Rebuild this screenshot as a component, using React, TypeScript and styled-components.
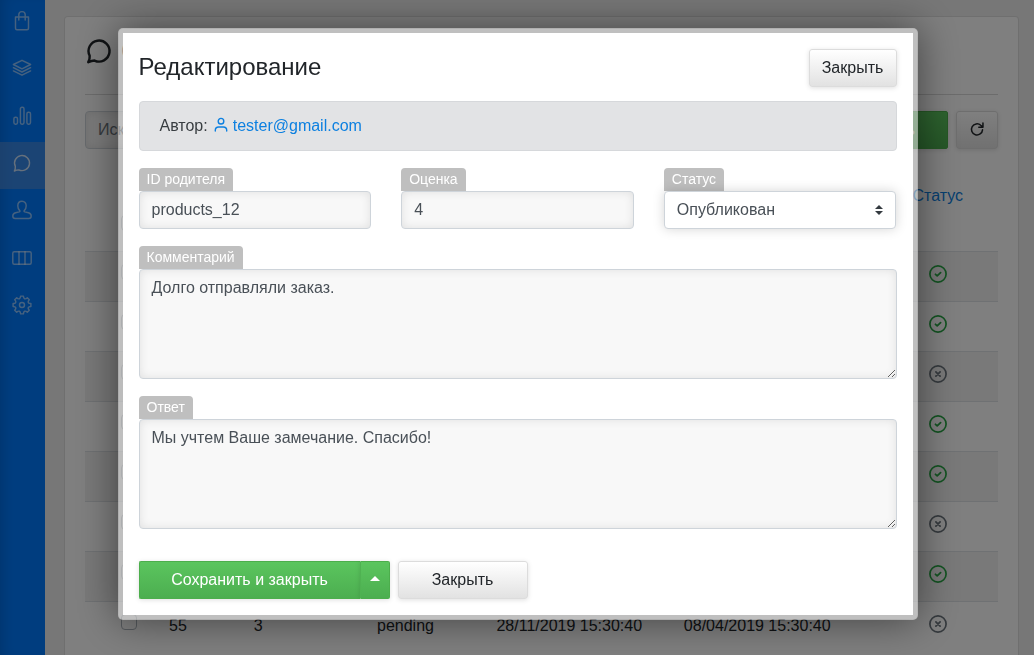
import React from "react";
import styled, { createGlobalStyle, css } from "styled-components";

const GlobalStyle = createGlobalStyle`
  *, *::before, *::after { box-sizing: border-box; }
  html, body { height: 100%; }
  body {
    margin: 0;
    overflow: hidden;
    background: #efefef;
    color: #212529;
    font: 400 16px/24px "Liberation Sans", Arial, sans-serif;
  }
  button, input, select, textarea { font: inherit; margin: 0; }
`;

const Shell = styled.div`
  display: flex;
  height: 100vh;
  overflow: hidden;
`;

const Sidebar = styled.nav`
  flex: none;
  width: 45px;
  background: #007bff;
  box-shadow: inset 10px 0 16px -10px rgba(0, 0, 0, 0.2);
  display: flex;
  flex-direction: column;
`;

const NavItem = styled.a<{ $active?: boolean }>`
  display: flex;
  align-items: center;
  justify-content: center;
  flex: none;
  height: 47.33px;
  padding: 0 1px 5px 0;
  color: ${(p) => (p.$active ? "rgba(255,255,255,.75)" : "rgba(255,255,255,.55)")};
  background: ${(p) => (p.$active ? "rgba(108,150,210,.5)" : "transparent")};
  svg { display: block; }
`;

const Main = styled.main`
  flex: 1;
  padding: 16px 15px 0 19px;
`;

const Card = styled.section`
  height: 800px;
  padding: 16px 20px;
  background: #fff;
  border: 1px solid rgba(0, 0, 0, 0.125);
  border-radius: 4px;
`;

const PageTitle = styled.h1`
  display: flex;
  align-items: center;
  gap: 8px;
  height: 38px;
  margin: 0;
  padding-bottom: 3px;
  font-size: 28px;
  font-weight: 400;
  svg { display: block; }
`;

const Divider = styled.hr`
  margin: 23px 0 16px;
  border: 0;
  border-top: 1px solid rgba(0, 0, 0, 0.15);
`;

const Toolbar = styled.div`
  display: flex;
  gap: 8px;
`;

const fieldBox = css`
  display: block;
  width: 100%;
  height: 38px;
  padding: 6px 12px;
  color: #495057;
  background: #f8f8f8;
  border: 1px solid #ced4da;
  border-radius: 4px;
  box-shadow: inset 0 0 10px rgba(0, 0, 0, 0.1);
  outline: none;
`;

const SearchInput = styled.input`
  ${fieldBox}
  flex: 1;
  width: auto;
  &::placeholder { color: #6c757d; opacity: 1; }
`;

const Button = styled.button<{ $width?: number; $green?: boolean }>`
  display: flex;
  align-items: center;
  justify-content: center;
  flex: none;
  height: 38px;
  width: ${(p) => (p.$width ? `${p.$width}px` : "auto")};
  padding: 0;
  white-space: nowrap;
  border-radius: ${(p) => (p.$green ? "2px" : "3px")};
  box-shadow: 0 1px 5px rgba(0, 0, 0, 0.13);
  ${(p) =>
    p.$green
      ? css`
          color: #fff;
          border: 1px solid #4cae4c;
          background: linear-gradient(#5bc55e, #4cae50);
        `
      : css`
          color: #212529;
          border: 1px solid #dcdcdc;
          background: linear-gradient(#fff, #e2e2e2);
        `}
`;

const Table = styled.div`
  margin-top: 10px;
`;

const columns = css`
  display: grid;
  grid-template-columns: 78px 30px 130.5px 164px 163.5px 212.5px 134.5px;
`;

const HeadRow = styled.div`
  ${columns}
  height: 92px;
`;

const Row = styled.div<{ $striped: boolean }>`
  ${columns}
  height: 50px;
  border-top: 1px solid #dee2e6;
  background: ${(p) => (p.$striped ? "rgba(0,0,0,.05)" : "transparent")};
`;

const Cell = styled.div`
  padding-top: 12px;
  text-align: center;
  white-space: nowrap;
`;

const CheckCell = styled.div<{ $head?: boolean }>`
  padding: ${(p) => (p.$head ? "56px" : "12px")} 0 0 36px;
`;

const Check = styled.span`
  display: block;
  width: 16px;
  height: 16px;
  border: 1px solid #adb5bd;
  border-radius: 4px;
  background: #fff;
`;

const StatusCell = styled.div<{ $ok?: boolean }>`
  display: flex;
  justify-content: center;
  padding: 12px 0 0 14px;
  color: ${(p) => (p.$ok ? "#28a745" : "#6c757d")};
`;

const StatusHead = styled.div`
  padding: 25px 0 0 14px;
  text-align: center;
  color: #0d80e0;
`;

const Backdrop = styled.div`
  position: fixed;
  inset: 0;
  padding: 28px 0 0 117.5px;
  background: rgba(0, 0, 0, 0.5);
`;

const Modal = styled.div`
  width: 800px;
  height: 592px;
  padding: 16px;
  background: #fff;
  background-clip: padding-box;
  border: 5px solid rgba(255, 255, 255, 0.5);
  border-radius: 5px;
  box-shadow: 0 0 40px rgba(0, 0, 0, 0.5);
`;

const ModalHeader = styled.header`
  display: flex;
  justify-content: space-between;
  height: 38px;
  margin-bottom: 14px;
`;

const ModalTitle = styled.h2`
  margin: 0;
  font-size: 24px;
  font-weight: 400;
  line-height: 36px;
`;

const AuthorBar = styled.div`
  display: flex;
  align-items: center;
  height: 50px;
  padding: 0 20px;
  color: #383d41;
  background: #e2e3e5;
  border: 1px solid #d6d8db;
  border-radius: 4px;
`;

const AuthorLink = styled.a`
  display: flex;
  align-items: center;
  gap: 5px;
  margin-left: 6px;
  color: #0d80e0;
  svg { margin-bottom: 3px; }
`;

const FieldRow = styled.div`
  display: grid;
  grid-template-columns: repeat(3, 1fr);
  gap: 30px;
`;

const Field = styled.div`
  margin-top: 17px;
`;

const Label = styled.label`
  display: block;
  width: fit-content;
  height: 23px;
  padding: 0 8px;
  font-size: 14px;
  line-height: 23px;
  color: #fff;
  background: #bfbfbf;
  border-radius: 4px 4px 0 0;
`;

const TextInput = styled.input`
  ${fieldBox}
`;

const TextArea = styled.textarea`
  ${fieldBox}
  height: 110px;
  resize: vertical;
`;

const SelectBox = styled.div`
  ${fieldBox}
  display: flex;
  align-items: center;
  justify-content: space-between;
  width: calc(100% - 0.5px);
  background: #fff;
  box-shadow: 0 0 12px rgba(0, 0, 0, 0.17);
`;

const Footer = styled.footer`
  display: flex;
  gap: 7.5px;
  margin-top: 32px;
`;

const Split = styled.div`
  display: flex;
  border-radius: 2px;
  box-shadow: 0 1px 5px rgba(0, 0, 0, 0.13);
`;

const SplitMain = styled(Button)`
  border-radius: 2px 0 0 2px;
  border-right: 0;
  box-shadow: none;
`;

const SplitCaret = styled(Button)`
  border-radius: 0 2px 2px 0;
  border-left-color: #4fb252;
  box-shadow: 0 0 5px rgba(0, 0, 0, 0.13);
  clip-path: inset(0 0 0 -6px);
  svg { margin-bottom: 3px; }
`;

type IconProps = { children: React.ReactNode; w?: number; h?: number; box?: string; sw?: number };
const Icon = ({ children, w = 22, h = 22, box = "0 0 22 22", sw = 1.45 }: IconProps) => (
  <svg width={w} height={h} viewBox={box} fill="none" stroke="currentColor" strokeWidth={sw} strokeLinecap="round" strokeLinejoin="round">
    {children}
  </svg>
);

/* Eight flat-topped teeth joined by rounded valleys. */
const gearPath = (() => {
  const at = (deg: number, r: number) => {
    const a = (deg * Math.PI) / 180;
    return `${(11 + r * Math.sin(a)).toFixed(2)} ${(11 - r * Math.cos(a)).toFixed(2)}`;
  };
  let d = `M${at(-9, 9)}`;
  for (let i = 0; i < 8; i++) {
    const c = i * 45;
    d += `L${at(c + 9, 9)}C${at(c + 13, 6.2)} ${at(c + 32, 6.2)} ${at(c + 36, 9)}`;
  }
  return `${d}Z`;
})();

const Bubble = ({ size, sw }: { size: number; sw: number }) => (
  <Icon w={size} h={size} box="0 0 24 24" sw={sw}>
    <path d="M2.8 21.6c.8-1.5 1.4-3.4 1.2-5.5A9 9 0 1 1 8.2 20.2c-1.8 0-3.5.5-5.4 1.4Z" />
  </Icon>
);

const navIcons = [
  <Icon><path d="M4.5 7h13v11.2a1.5 1.5 0 0 1-1.5 1.5H6a1.5 1.5 0 0 1-1.5-1.5ZM7.8 10V4.8a3.2 3.2 0 0 1 6.4 0V10" /></Icon>,
  <Icon><path d="M11 3.3 19.6 7.5 11 11.8 2.4 7.5ZM2.4 10.7 11 15l8.6-4.3M2.4 13.9 11 18.2l8.6-4.3" /></Icon>,
  <Icon><rect x="2.9" y="12.2" width="3.6" height="7" rx="1.6" /><rect x="9.4" y="2.2" width="3.6" height="17" rx="1.6" /><rect x="15.9" y="7.2" width="3.6" height="12" rx="1.6" /></Icon>,
  <Bubble size={20} sw={1.7} />,
  <Icon><path d="M11 2.2c-2.6 0-4.2 2-4.2 4.6 0 2 .7 3.8 1.9 4.8.5.5.2 1.1-.5 1.3l-3.6.9c-1.4.4-2.8 1.5-2.8 3.2 0 1.6.8 2.5 2.4 2.5h13.6c1.6 0 2.4-.9 2.4-2.5 0-1.7-1.4-2.8-2.8-3.2l-3.6-.9c-.7-.2-1-.8-.5-1.3 1.2-1 1.9-2.8 1.9-4.8 0-2.6-1.6-4.6-4.2-4.6Z" /></Icon>,
  <Icon><rect x="1.8" y="4.7" width="18.4" height="12.6" rx="1.5" /><path d="M8 4.7v12.6M14 4.7v12.6" /></Icon>,
  <Icon><path d={gearPath} /><circle cx="11" cy="11" r="2.5" /></Icon>,
];

const Status = ({ ok }: { ok: boolean }) => (
  <StatusCell $ok={ok}>
    <Icon w={20} h={20} box="0 0 20 20" sw={1.7}>
      <circle cx="10" cy="10" r="8.1" />
      <path strokeWidth="1.8" d={ok ? "m7.5 10.3 1.7 1.6 3.4-3.2" : "m7.9 7.9 4.2 4.2m0-4.2-4.2 4.2"} />
    </Icon>
  </StatusCell>
);

type Comment = { ok: boolean; id?: string; rating?: string; state?: string; created?: string; updated?: string };
const comments: Comment[] = [
  { ok: true },
  { ok: true },
  { ok: false },
  { ok: true },
  { ok: true },
  { ok: false },
  { ok: true },
  { ok: false, id: "55", rating: "3", state: "pending", created: "28/11/2019 15:30:40", updated: "08/04/2019 15:30:40" },
];

export default function App() {
  return (
    <>
      <GlobalStyle />
      <Shell>
        <Sidebar>
          {navIcons.map((icon, i) => (
            <NavItem key={i} $active={i === 3}>{icon}</NavItem>
          ))}
        </Sidebar>
        <Main>
          <Card>
            <PageTitle>
              <Bubble size={28} sw={2.1} />
              Отзывы
            </PageTitle>
            <Divider />
            <Toolbar>
              <SearchInput placeholder="Искать" />
              <Button $green $width={137}>Добавить</Button>
              <Button $width={42}>
                <Icon w={18} h={18} box="0 0 24 26" sw={2.2}>
                  <path d="M20 12.8a8 8 0 1 1-2.6-6.6L20 8.4M20.6 3v6h-6" />
                </Icon>
              </Button>
            </Toolbar>
            <Table>
              <HeadRow>
                <CheckCell $head><Check /></CheckCell>
                <Cell /><Cell /><Cell /><Cell /><Cell />
                <StatusHead>Статус</StatusHead>
              </HeadRow>
              {comments.map((c, i) => (
                <Row key={i} $striped={i % 2 === 0}>
                  <CheckCell><Check /></CheckCell>
                  <Cell>{c.id}</Cell>
                  <Cell>{c.rating}</Cell>
                  <Cell>{c.state}</Cell>
                  <Cell>{c.created}</Cell>
                  <Cell>{c.updated}</Cell>
                  <Status ok={c.ok} />
                </Row>
              ))}
            </Table>
          </Card>
        </Main>
      </Shell>
      <Backdrop>
        <Modal role="dialog">
          <ModalHeader>
            <ModalTitle>Редактирование</ModalTitle>
            <Button $width={88}>Закрыть</Button>
          </ModalHeader>
          <AuthorBar>
            Автор:
            <AuthorLink>
              <Icon w={14} h={16} box="0 0 14 16" sw={1.4}>
                <circle cx="7" cy="4.2" r="2.8" />
                <path d="M1.3 14v-.8c0-2 1.6-3.2 3.4-3.2h4.6c1.8 0 3.4 1.2 3.4 3.2v.8" />
              </Icon>
              tester@gmail.com
            </AuthorLink>
          </AuthorBar>
          <FieldRow>
            <Field>
              <Label>ID родителя</Label>
              <TextInput defaultValue="products_12" />
            </Field>
            <Field>
              <Label>Оценка</Label>
              <TextInput defaultValue="4" />
            </Field>
            <Field>
              <Label>Статус</Label>
              <SelectBox>
                Опубликован
                <svg width="8" height="10" viewBox="0 0 4 5">
                  <path fill="#343a40" d="M2 0 0 2h4zm0 5L0 3h4z" />
                </svg>
              </SelectBox>
            </Field>
          </FieldRow>
          <Field>
            <Label>Комментарий</Label>
            <TextArea defaultValue="Долго отправляли заказ." />
          </Field>
          <Field>
            <Label>Ответ</Label>
            <TextArea defaultValue="Мы учтем Ваше замечание. Спасибо!" />
          </Field>
          <Footer>
            <Split>
              <SplitMain $green $width={221}>Сохранить и закрыть</SplitMain>
              <SplitCaret $green $width={30.5}>
                <svg width="10" height="5" viewBox="0 0 10 5"><path fill="#fff" d="M0 5 5 0l5 5z" /></svg>
              </SplitCaret>
            </Split>
            <Button $width={130}>Закрыть</Button>
          </Footer>
        </Modal>
      </Backdrop>
    </>
  );
}
